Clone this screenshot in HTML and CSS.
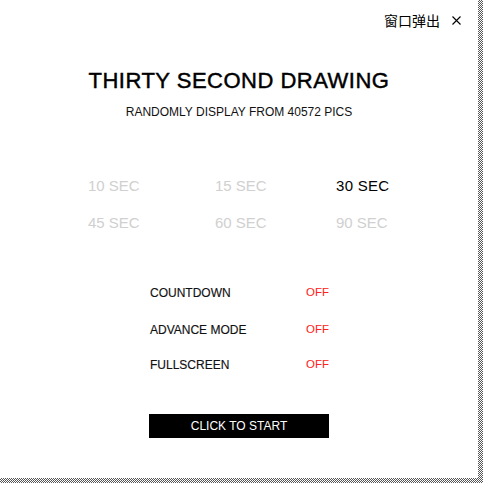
FILE: index.html
```html
<!DOCTYPE html>
<html lang="zh">
<head>
<meta charset="utf-8">
<title>Thirty Second Drawing</title>
<link rel="stylesheet" href="styles.css">
</head>
<body>
<div class="window">
  <div class="topbar">
    <span class="popout">窗口弹出</span>
    <svg class="close" width="9" height="9" viewBox="0 0 9 9" aria-label="close"><path d="M0.5 0.5L8.5 8.5M8.5 0.5L0.5 8.5" stroke="#000" stroke-width="1.1" fill="none"/></svg>
  </div>
  <h1 class="title">THIRTY SECOND DRAWING</h1>
  <p class="subtitle">RANDOMLY DISPLAY FROM 40572 PICS</p>
  <div class="durations">
    <span class="dur">10 SEC</span>
    <span class="dur">15 SEC</span>
    <span class="dur active">30 SEC</span>
    <span class="dur">45 SEC</span>
    <span class="dur">60 SEC</span>
    <span class="dur">90 SEC</span>
  </div>
  <div class="options">
    <div class="option"><span class="label">COUNTDOWN</span><span class="state">OFF</span></div>
    <div class="option"><span class="label">ADVANCE MODE</span><span class="state">OFF</span></div>
    <div class="option"><span class="label">FULLSCREEN</span><span class="state">OFF</span></div>
  </div>
  <button class="start">CLICK TO START</button>
</div>
</body>
</html>
```
FILE: styles.css
```css
html, body {
  margin: 0;
  padding: 0;
}
body {
  width: 483px;
  height: 483px;
  background-color: #fff;
  background-image: repeating-conic-gradient(#555 0 25%, #fff 0 50%);
  background-size: 2px 2px;
  font-family: "Liberation Sans", Arial, "Noto Sans CJK SC", sans-serif;
  color: #111;
}
.window {
  width: 478px;
  height: 478px;
  background: #fff;
  display: flex;
  flex-direction: column;
  align-items: center;
}
.topbar {
  align-self: stretch;
  display: flex;
  justify-content: flex-end;
  align-items: center;
  gap: 11px;
  padding: 13px 17px 0 0;
  font-size: 14px;
  line-height: 14px;
  color: #000;
}
.popout {
  font-family: "Noto Sans CJK SC", sans-serif;
  margin-right: 1px;
}
.close {
  display: block;
  margin-top: 1px;
}
.title {
  margin: 43px 0 0;
  font-size: 22px;
  line-height: 22px;
  font-weight: normal;
  letter-spacing: 0.5px;
  color: #000;
  -webkit-text-stroke: 0.45px #000;
}
.subtitle {
  margin: 14px 0 0;
  font-size: 12px;
  line-height: 12px;
  color: #111;
}
.durations {
  margin-top: 60px;
  display: grid;
  grid-template-columns: 127px 121px 54px;
  row-gap: 22px;
  font-size: 15px;
  line-height: 15px;
}
.dur {
  color: #d0d0d0;
}
.dur.active {
  color: #000;
  letter-spacing: 0.3px;
}
.options {
  margin-top: 57px;
  box-sizing: border-box;
  width: 180px;
  padding-left: 1px;
  display: flex;
  flex-direction: column;
  font-size: 12px;
  line-height: 12px;
}
.option {
  display: flex;
  justify-content: space-between;
  align-items: flex-start;
}
.option + .option {
  margin-top: 25px;
}
.option:last-child {
  margin-top: 23px;
}
.label {
  color: #111;
  -webkit-text-stroke: 0.15px #111;
}
.state {
  color: #ff2020;
  font-size: 11.5px;
  margin-top: -1px;
}
.start {
  margin-top: 43px;
  width: 180px;
  height: 24px;
  border: none;
  padding: 0;
  background: #000;
  color: #fff;
  font-family: "Liberation Sans", Arial, sans-serif;
  font-size: 12px;
  line-height: 24px;
}
```
